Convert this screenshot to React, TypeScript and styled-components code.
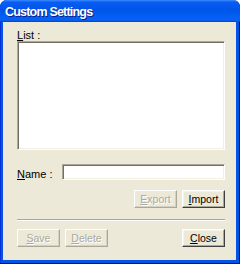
import styled, { createGlobalStyle } from "styled-components"

const Global = createGlobalStyle`
	html, body {
		margin: 0;
		padding: 0;
		background: #fff;
	}
	body {
		font-family: "Liberation Sans", Arial, sans-serif;
		font-size: 11px;
	}
`

const Window = styled.div`
	width: 240px;
	height: 264px;
	display: flex;
	flex-direction: column;
	border-radius: 7px 7px 0 0;
	overflow: hidden;
	background: #0454e4;
	box-shadow: inset -1px -1px 0 #00138c, inset 1px 0 0 #0831d9;
`

const TitleBar = styled.div`
	height: 22px;
	flex: none;
	display: flex;
	align-items: center;
	padding-left: 5px;
	background: linear-gradient(
		to bottom,
		#3a8cff 0%,
		#0a5df2 10%,
		#0054e8 45%,
		#0460f5 80%,
		#0b5fef 92%,
		#003fd3 100%
	);
`

const Title = styled.span`
	font-family: "Liberation Sans", Arial, sans-serif;
	font-weight: bold;
	font-size: 12.5px;
	color: #fff;
	text-shadow: 1px 1px 0 #0a1e8c;
	letter-spacing: -0.8px;
	padding-top: 1px;
`

const Client = styled.div`
	flex: 1;
	margin: 0 4px 4px 3px;
	background: #ece9d8;
	padding: 7px 11px 0 14px;
	display: flex;
	flex-direction: column;
	color: #000;
`

const Label = styled.div`
	height: 12px;
	line-height: 12px;
	white-space: nowrap;
`

const Key = styled.span`
	text-decoration: underline;
`

const ListBox = styled.div`
	height: 109px;
	background: #fff;
	border: 1px solid;
	border-color: #aca899 #fff #fff #aca899;
	box-shadow: inset 1px 1px 0 #716f64, inset -1px -1px 0 #f1efe2;
	box-sizing: border-box;
`

const NameRow = styled.div`
	margin-top: 14px;
	display: flex;
	align-items: center;
	height: 16px;
`

const NameLabel = styled(Label)`
	width: 45px;
	flex: none;
	padding-top: 3px;
`

const Input = styled.div`
	flex: 1;
	height: 16px;
	box-sizing: border-box;
	background: #fff;
	border: 1px solid;
	border-color: #aca899 #fff #fff #aca899;
	box-shadow: inset 1px 1px 0 #716f64, inset -1px -1px 0 #f1efe2;
`

const ButtonRow = styled.div<{ $top: number; $spread?: boolean }>`
	margin-top: ${(p) => p.$top}px;
	display: flex;
	gap: 5px;
	justify-content: ${(p) => (p.$spread ? "flex-start" : "flex-end")};
`

const Button = styled.div<{ $disabled?: boolean }>`
	width: 43px;
	height: 18px;
	box-sizing: border-box;
	display: flex;
	align-items: center;
	justify-content: center;
	font-size: 10.5px;
	background: #ece9d8;
	border: 1px solid;
	border-color: #fff #404040 #404040 #fff;
	box-shadow: inset -1px -1px 0 #aca899, inset 1px 1px 0 #f5f4ea;
	color: ${(p) => (p.$disabled ? "#aca899" : "#000")};
	text-shadow: ${(p) => (p.$disabled ? "1px 1px 0 #fff" : "none")};
	${(p) => (p.$disabled ? "border-color: #fff #aca899 #aca899 #fff; box-shadow: inset -1px -1px 0 #d4d0c8;" : "")}
`

const Spacer = styled.div`
	flex: 1;
`

const Separator = styled.div`
	margin-top: 11px;
	height: 0;
	border-top: 1px solid #aca899;
	border-bottom: 1px solid #fff;
`

export default function App() {
	return (
		<>
			<Global />
			<Window>
				<TitleBar>
					<Title>Custom Settings</Title>
				</TitleBar>
				<Client>
					<Label>
						<Key>L</Key>ist :
					</Label>
					<ListBox />
					<NameRow>
						<NameLabel>
							<Key>N</Key>ame :
						</NameLabel>
						<Input />
					</NameRow>
					<ButtonRow $top={10}>
						<Button $disabled>
							<span>
								<Key>E</Key>xport
							</span>
						</Button>
						<Button>
							<span>
								<Key>I</Key>mport
							</span>
						</Button>
					</ButtonRow>
					<Separator />
					<ButtonRow $top={8} $spread>
						<Button $disabled>
							<span>
								<Key>S</Key>ave
							</span>
						</Button>
						<Button $disabled>
							<span>
								<Key>D</Key>elete
							</span>
						</Button>
						<Spacer />
						<Button>
							<span>
								<Key>C</Key>lose
							</span>
						</Button>
					</ButtonRow>
				</Client>
			</Window>
		</>
	)
}
